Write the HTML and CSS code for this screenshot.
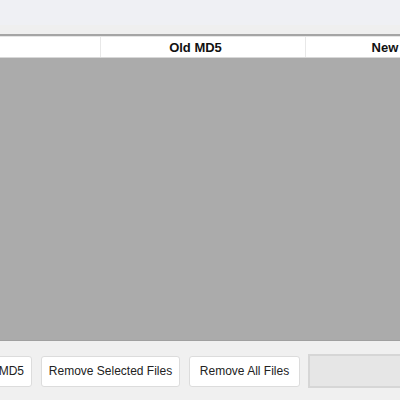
FILE: index.html
```html
<!DOCTYPE html>
<html>
<head>
<meta charset="utf-8">
<link rel="stylesheet" href="styles.css">
</head>
<body>
<div class="window">
  <div class="titlebar"></div>
  <div class="toolbar"></div>
  <div class="list">
    <div class="header">
      <div class="col col-name"></div>
      <div class="col col-old">Old MD5</div>
      <div class="col col-new">New MD5</div>
    </div>
    <div class="rows"></div>
  </div>
  <div class="actions">
    <button class="btn btn-first">Calculate MD5</button>
    <button class="btn btn-sel">Remove Selected Files</button>
    <button class="btn btn-all">Remove All Files</button>
    <div class="progress"></div>
  </div>
</div>
</body>
</html>
```
FILE: styles.css
```css
html, body {
  margin: 0;
  padding: 0;
  width: 400px;
  height: 400px;
  overflow: hidden;
  background: #f0f0f0;
  font-family: "Liberation Sans", Arial, sans-serif;
}
.window {
  width: 400px;
  height: 400px;
  display: flex;
  flex-direction: column;
}
.titlebar {
  height: 25px;
  background: #eff0f4;
}
.toolbar {
  height: 9px;
  background: #efefef;
}
.list {
  border-top: 2px solid #a5a5a5;
  display: flex;
  flex-direction: column;
}
.header {
  display: flex;
  background: #ffffff;
  border-top: 1px solid #e6e6e6;
  border-bottom: 1px solid #d8d8d8;
  height: 20px;
  overflow: hidden;
}
.col {
  flex: none;
  box-sizing: border-box;
  height: 20px;
  padding-top: 2px;
  line-height: 18px;
  font-size: 13px;
  font-weight: bold;
  color: #111;
  text-align: center;
  padding-right: 15px;
  border-right: 1px solid #e8e8e8;
  white-space: nowrap;
}
.col-name { width: 101px; }
.col-old { width: 205px; }
.col-new { width: 205px; }
.rows {
  height: 282px;
  background: #ababab;
  border-bottom: 1px solid #a0a0a0;
}
.actions {
  display: flex;
  align-items: center;
  gap: 9px;
  padding-top: 13px;
  margin-left: -58px;
}
.btn {
  flex: none;
  box-sizing: border-box;
  height: 31px;
  padding: 0;
  background: #ffffff;
  border: 1px solid #dcdcdc;
  border-radius: 3px;
  font-family: "Liberation Sans", Arial, sans-serif;
  font-size: 12px;
  color: #222;
}
.btn-first { width: 90px; text-align: right; padding-right: 7px; }
.btn-sel { width: 139px; }
.btn-all { width: 111px; }
.progress {
  flex: none;
  box-sizing: border-box;
  width: 120px;
  height: 34px;
  margin-left: -1px;
  background: #e6e6e6;
  border: 2px solid #d6d6d6;
}
```
